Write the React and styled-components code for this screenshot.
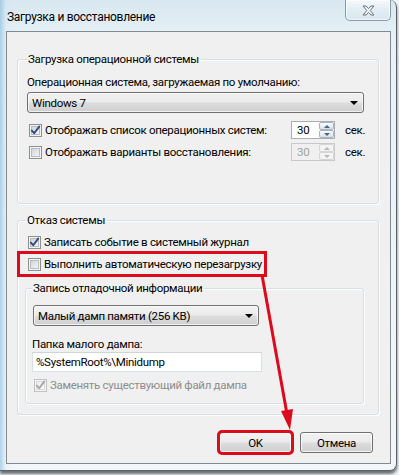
import React from "react";
import styled, { createGlobalStyle, css } from "styled-components";

const Global = createGlobalStyle`
  html, body { margin: 0; padding: 0; }
  body {
    width: 399px; height: 475px; overflow: hidden;
    background: #eef3f6;
    font-family: Roboto, "Noto Sans", sans-serif;
    font-size: 11.5px; color: #000;
    letter-spacing: -0.3px;
  }
`;

const Frame = styled.div`
  position: relative;
  box-sizing: border-box;
  width: 397px;
  height: 471px;
  border-right: 1px solid #56626c;
  border-bottom: 1px solid #56626c;
  border-radius: 0 7px 7px 0;
  box-shadow: 0 3px 3px rgba(0, 0, 0, 0.55);
  background:
    linear-gradient(90deg, rgba(120, 180, 220, 0.55) 0px, rgba(200, 228, 243, 0.2) 6px, rgba(255,255,255,0) 14px),
    linear-gradient(180deg, #d8e7f0 0%, #e7f1f7 8%, #eef5f9 60%, #f3f7fa 100%);
  display: flex;
  flex-direction: column;
  padding: 0 5px 6px 6px;
`;

const TitleBar = styled.div`
  height: 31px;
  display: flex;
  justify-content: space-between;
  align-items: flex-start;
`;

const Title = styled.div`
  padding-top: 9px;
  margin-left: 1px;
  line-height: 16px;
  font-size: 12px;
  color: #000;
`;

const CloseButton = styled.div`
  box-sizing: border-box;
  width: 46px;
  height: 21px;
  border: 1px solid #8c98a3;
  border-top: none;
  border-radius: 0 0 5px 5px;
  background: linear-gradient(180deg, rgba(255,255,255,0.75) 0%, rgba(230,240,246,0.6) 50%, rgba(214,228,237,0.6) 100%);
  box-shadow: inset 0 0 0 1px rgba(255, 255, 255, 0.6);
  display: flex;
  align-items: center;
  justify-content: center;
`;

const Client = styled.div`
  flex: 1;
  box-sizing: border-box;
  border: 1px solid #7f8a93;
  background: #f0f0f0;
  display: flex;
  flex-direction: column;
  padding: 19px 11px 10px 10px;
`;

const Group = styled.fieldset`
  margin: 0;
  min-width: 0;
  border: 1px solid #d5dfe5;
  border-radius: 3px;
  box-shadow: inset 1px 1px 0 #fff, 1px 1px 0 #fff;
  display: flex;
  flex-direction: column;
  align-items: flex-start;
  ${(p) => css`
    padding: 0 ${p.$pr}px ${p.$pb}px ${p.$pl}px;
  `}
  ${(p) => p.$mt && css`margin-top: ${p.$mt}px;`}
  ${(p) => p.$nested && css`
    width: 339px;
    box-sizing: border-box;
    margin-left: -1px;
  `}
`;

const Legend = styled.legend`
  padding: 0 2px 0 1px;
  line-height: 16px;
`;

const Label = styled.div`
  line-height: ${(p) => p.$lh || 16}px;
  margin-top: ${(p) => p.$mt || 0}px;
  white-space: nowrap;
`;

const Combo = styled.div`
  box-sizing: border-box;
  width: ${(p) => p.$w}px;
  height: 21px;
  margin-top: ${(p) => p.$mt || 0}px;
  margin-left: ${(p) => p.$ml || 0}px;
  border: 1px solid #707070;
  border-radius: 3px;
  background: linear-gradient(180deg, #f2f2f2 0%, #ebebeb 48%, #dddddd 52%, #cfcfcf 100%);
  box-shadow: inset 0 0 0 1px rgba(255,255,255,0.7);
  display: flex;
  align-items: center;
  justify-content: space-between;
  padding: 0 5px 0 4px;
  white-space: nowrap;
`;

const Arrow = styled.span`
  width: 0;
  height: 0;
  border-left: 4px solid transparent;
  border-right: 4px solid transparent;
  border-top: 4px solid #000;
`;

const Row = styled.div`
  display: flex;
  align-items: center;
  height: 22px;
  white-space: nowrap;
  margin-top: ${(p) => p.$mt || 0}px;
  color: ${(p) => (p.$disabled ? "#8d8d8d" : "#000")};
  ${(p) => p.$highlight && css`
    width: fit-content;
    margin-left: -7px;
    padding-left: 7px;
    padding-right: 3px;
    outline: 3px solid #dc0a1b;
    outline-offset: -1px;
  `}
`;

const SpinRow = styled.div`
  display: grid;
  grid-template-columns: 264px 44px auto;
  align-items: center;
  height: 22px;
  margin-top: ${(p) => p.$mt || 0}px;
  white-space: nowrap;
`;

const CheckCell = styled.div`
  display: flex;
  align-items: center;
`;

const BoxWrap = styled.span`
  display: inline-flex;
  margin-left: 2px;
  margin-right: 3px;
`;

const Spin = styled.div`
  box-sizing: border-box;
  width: 44px;
  height: 18px;
  border: 1px solid ${(p) => (p.$disabled ? "#c9c9c9" : "#abadb3")};
  background: ${(p) => (p.$disabled ? "#f0f0f0" : "#fff")};
  display: flex;
  align-items: stretch;
  color: ${(p) => (p.$disabled ? "#a0a0a0" : "#000")};
`;

const SpinValue = styled.div`
  flex: 1;
  display: flex;
  align-items: center;
  padding-left: 5px;
`;

const SpinButtons = styled.div`
  width: 15px;
  display: flex;
  flex-direction: column;
`;

const SpinBtn = styled.div`
  flex: 1;
  box-sizing: border-box;
  border: 1px solid ${(p) => (p.$disabled ? "#d6d6d6" : "#a6b3c0")};
  border-radius: 2px;
  background: ${(p) =>
    p.$disabled
      ? "#f4f4f4"
      : "linear-gradient(180deg, #fbfcfd 0%, #e8eef3 50%, #d8e1e8 100%)"};
  display: flex;
  align-items: center;
  justify-content: center;
`;

const Tri = styled.span`
  width: 0;
  height: 0;
  border-left: 3px solid transparent;
  border-right: 3px solid transparent;
  ${(p) =>
    p.$up
      ? css`border-bottom: 3px solid ${p.$disabled ? "#b8b8b8" : "#4d6185"};`
      : css`border-top: 3px solid ${p.$disabled ? "#b8b8b8" : "#4d6185"};`}
`;

const Unit = styled.span`
  margin-left: 10px;
`;

const TextBox = styled.div`
  box-sizing: border-box;
  width: 230px;
  height: 20px;
  border: 1px solid #dbdfe6;
  border-top-color: #d0d3d8;
  background: #fff;
  display: flex;
  align-items: center;
  padding-left: 3px;
  white-space: nowrap;
`;

const Footer = styled.div`
  margin-top: auto;
  margin-right: 6px;
  display: flex;
  justify-content: flex-end;
  gap: 8px;
`;

const Button = styled.div`
  box-sizing: border-box;
  width: 73px;
  height: 21px;
  border: 1px solid #707070;
  border-radius: 3px;
  background: linear-gradient(180deg, #f2f2f2 0%, #ebebeb 48%, #dddddd 52%, #cfcfcf 100%);
  box-shadow: inset 0 0 0 1px rgba(255,255,255,0.75);
  display: flex;
  align-items: center;
  justify-content: center;
  ${(p) => p.$highlight && css`
    outline: 3px solid #dc0a1b;
    outline-offset: -1px;
  `}
`;

const Overlay = styled.svg`
  position: absolute;
  left: 0;
  top: 0;
  pointer-events: none;
`;

function CheckBox({ checked, disabled }) {
  const border = disabled ? "#c2c2c2" : "#8e8f8f";
  const mark = disabled ? "#a6a6a6" : "#33497a";
  const id = disabled ? "cbd" : "cbn";
  return (
    <BoxWrap>
      <svg width="13" height="13" viewBox="0 0 13 13">
        <defs>
          <linearGradient id={id} x1="0" y1="0" x2="1" y2="1">
            <stop offset="0" stopColor={disabled ? "#ececec" : "#cdd1d6"} />
            <stop offset="1" stopColor={disabled ? "#fafafa" : "#f7f7f7"} />
          </linearGradient>
        </defs>
        <rect x="0.5" y="0.5" width="12" height="12" fill="#f4f4f4" stroke={border} />
        <rect x="2.5" y="2.5" width="8" height="8" fill={`url(#${id})`} stroke={disabled ? "#dadada" : "#b6bcc4"} />
        {checked && (
          <path d="M2.8 6.6 L5.2 9.2 L10.2 2.6" fill="none" stroke={mark} strokeWidth="1.9" strokeLinecap="round" strokeLinejoin="round" />
        )}
      </svg>
    </BoxWrap>
  );
}

function Spinner({ value, disabled }) {
  return (
    <Spin $disabled={disabled}>
      <SpinValue>{value}</SpinValue>
      <SpinButtons>
        <SpinBtn $disabled={disabled}><Tri $up $disabled={disabled} /></SpinBtn>
        <SpinBtn $disabled={disabled}><Tri $disabled={disabled} /></SpinBtn>
      </SpinButtons>
    </Spin>
  );
}

function CloseGlyph() {
  return (
    <svg width="13" height="11" viewBox="0 0 13 11">
      <path
        d="M1 1 H4 L6.5 3.6 L9 1 H12 L8.2 5.5 L12 10 H9 L6.5 7.4 L4 10 H1 L4.8 5.5 Z"
        fill="#f3f5f7"
        stroke="#68717a"
        strokeWidth="1"
        strokeLinejoin="round"
      />
    </svg>
  );
}

export default function App() {
  return (
    <>
      <Global />
      <Frame>
        <TitleBar>
          <Title>Загрузка и восстановление</Title>
          <CloseButton><CloseGlyph /></CloseButton>
        </TitleBar>
        <Client>
          <Group $pl={9} $pr={16} $pb={40}>
            <Legend>Загрузка операционной системы</Legend>
            <Label $mt={7}>Операционная система, загружаемая по умолчанию:</Label>
            <Combo $w={337} $mt={2}>
              <span>Windows 7</span>
              <Arrow />
            </Combo>
            <SpinRow $mt={6}>
              <CheckCell>
                <CheckBox checked />
                <span>Отображать список операционных систем:</span>
              </CheckCell>
              <Spinner value="30" />
              <Unit>сек.</Unit>
            </SpinRow>
            <SpinRow>
              <CheckCell>
                <CheckBox />
                <span>Отображать варианты восстановления:</span>
              </CheckCell>
              <Spinner value="30" disabled />
              <Unit>сек.</Unit>
            </SpinRow>
          </Group>

          <Group $pl={8} $pr={16} $pb={10} $mt={8}>
            <Legend>Отказ системы</Legend>
            <Row $mt={3}>
              <CheckBox checked />
              <span>Записать событие в системный журнал</span>
            </Row>
            <Row $highlight>
              <CheckBox />
              <span>Выполнить автоматическую перезагрузку</span>
            </Row>
            <Group $nested $pl={6} $pr={8} $pb={7} $mt={5}>
              <Legend>Запись отладочной информации</Legend>
              <Combo $w={226} $mt={9} $ml={1}>
                <span>Малый дамп памяти (256 KB)</span>
                <Arrow />
              </Combo>
              <Label $mt={11} $lh={15}>Папка малого дампа:</Label>
              <TextBox>%SystemRoot%\Minidump</TextBox>
              <Row $mt={2} $disabled>
                <CheckBox checked disabled />
                <span>Заменять существующий файл дампа</span>
              </Row>
            </Group>
          </Group>

          <Footer>
            <Button $highlight>OK</Button>
            <Button>Отмена</Button>
          </Footer>
        </Client>
        <Overlay width="399" height="475" viewBox="0 0 399 475">
          <line x1="262" y1="275" x2="287" y2="414" stroke="#dc0a1b" strokeWidth="3" />
          <polygon points="290,430 281,411 293,409" fill="#dc0a1b" />
        </Overlay>
      </Frame>
    </>
  );
}
